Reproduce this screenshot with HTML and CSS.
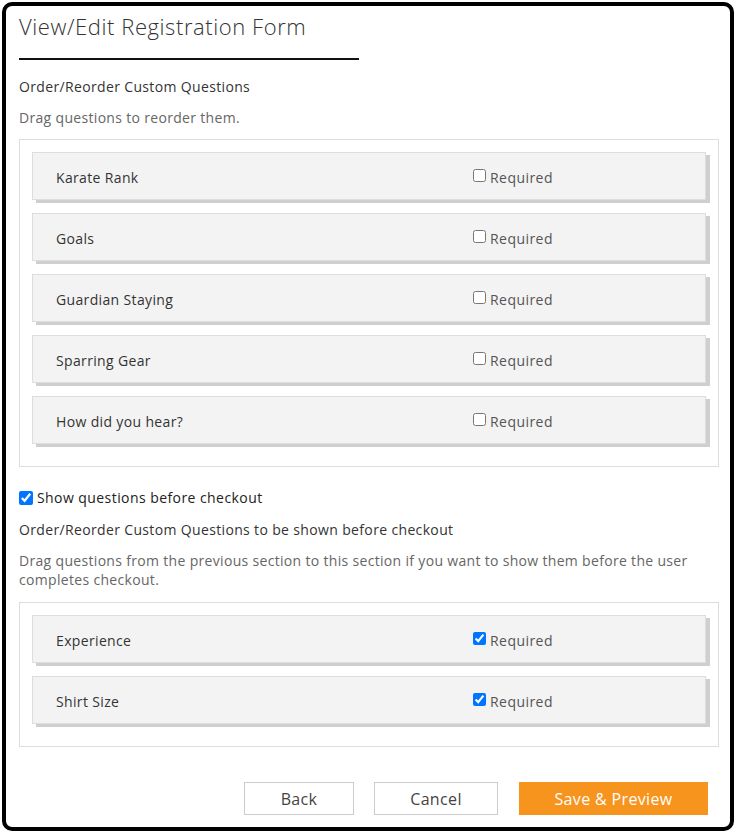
FILE: index.html
```html
<!DOCTYPE html>
<html>
<head>
<meta charset="utf-8">
<link rel="stylesheet" href="styles.css">
</head>
<body>
<div class="frame">
  <h1 class="title">View/Edit Registration Form</h1>
  <div class="rule"></div>
  <p class="label first">Order/Reorder Custom Questions</p>
  <p class="hint">Drag questions to reorder them.</p>
  <div class="list">
    <div class="item"><span class="name">Karate Rank</span><label class="req"><input type="checkbox">Required</label></div>
    <div class="item"><span class="name">Goals</span><label class="req"><input type="checkbox">Required</label></div>
    <div class="item"><span class="name">Guardian Staying</span><label class="req"><input type="checkbox">Required</label></div>
    <div class="item"><span class="name">Sparring Gear</span><label class="req"><input type="checkbox">Required</label></div>
    <div class="item"><span class="name">How did you hear?</span><label class="req"><input type="checkbox">Required</label></div>
  </div>
  <label class="show"><input type="checkbox" checked>Show questions before checkout</label>
  <p class="label second">Order/Reorder Custom Questions to be shown before checkout</p>
  <p class="hint long">Drag questions from the previous section to this section if you want to show them before the user completes checkout.</p>
  <div class="list">
    <div class="item"><span class="name">Experience</span><label class="req"><input type="checkbox" checked>Required</label></div>
    <div class="item"><span class="name">Shirt Size</span><label class="req"><input type="checkbox" checked>Required</label></div>
  </div>
  <div class="actions">
    <button class="btn back">Back</button>
    <button class="btn cancel">Cancel</button>
    <button class="btn primary">Save &amp; Preview</button>
  </div>
</div>
</body>
</html>
```
FILE: styles.css
```css
html, body {
  margin: 0;
  padding: 0;
  background: #fff;
}
body {
  font-family: "Open Sans", "Liberation Sans", sans-serif;
  color: #333;
  letter-spacing: 0.35px;
}
.frame {
  box-sizing: border-box;
  width: 732px;
  height: 829px;
  margin: 2px;
  border: 4px solid #000;
  border-radius: 10px;
  padding: 0 11px 0 13px;
}
.title {
  margin: 8px 0 0;
  font-size: 22px;
  line-height: 24px;
  font-weight: 300;
  color: #333;
  letter-spacing: 0.58px;
}
.rule {
  width: 340px;
  height: 2px;
  background: #111;
  margin-top: 20px;
}
.label {
  margin: 18px 0 0;
  font-size: 14px;
  line-height: 18px;
  color: #333;
}
.label.second {
  margin-top: 13px;
}
.hint {
  margin: 13px 0 0;
  font-size: 14px;
  line-height: 18px;
  color: #666;
  letter-spacing: 0.32px;
}
.hint.long {
  margin-top: 12px;
  line-height: 19px;
}
.list {
  margin-top: 12px;
  border: 1px solid #ddd;
  padding: 12px 12px 22px;
}
.hint.long + .list {
  margin-top: 13px;
}
.item {
  box-sizing: border-box;
  height: 48px;
  display: grid;
  grid-template-columns: 417px 1fr;
  align-items: center;
  padding: 3px 0 0 23px;
  background: #f3f3f3;
  border: 1px solid #ddd;
  box-shadow: 4px 3px 0 #cfcfcf;
  margin-bottom: 13px;
  font-size: 14px;
  color: #333;
}
.item:last-child {
  margin-bottom: 0;
}
.req {
  display: flex;
  align-items: center;
  color: #555;
  font-size: 14px;
  letter-spacing: 0.45px;
}
.req input {
  margin: 0 4px 4px 0;
  width: 13px;
  height: 13px;
}
.show {
  display: flex;
  align-items: center;
  margin-top: 21px;
  font-size: 14px;
  line-height: 20px;
  color: #222;
  letter-spacing: 0.43px;
}
.show input {
  margin: 0 4px 0 0;
  width: 14px;
  height: 14px;
}
.actions {
  display: flex;
  justify-content: flex-end;
  gap: 20px;
  margin-top: 35px;
  padding-right: 11px;
}
.btn {
  box-sizing: border-box;
  height: 33px;
  font-family: inherit;
  font-size: 16px;
  letter-spacing: 0.35px;
  color: #444;
  background: #fff;
  border: 1px solid #ccc;
  padding: 0;
}
.back { width: 110px; }
.cancel { width: 124px; margin-right: 1px; }
.primary {
  width: 189px;
  background: #f7941d;
  border-color: #f7941d;
  color: #fff;
}
```
